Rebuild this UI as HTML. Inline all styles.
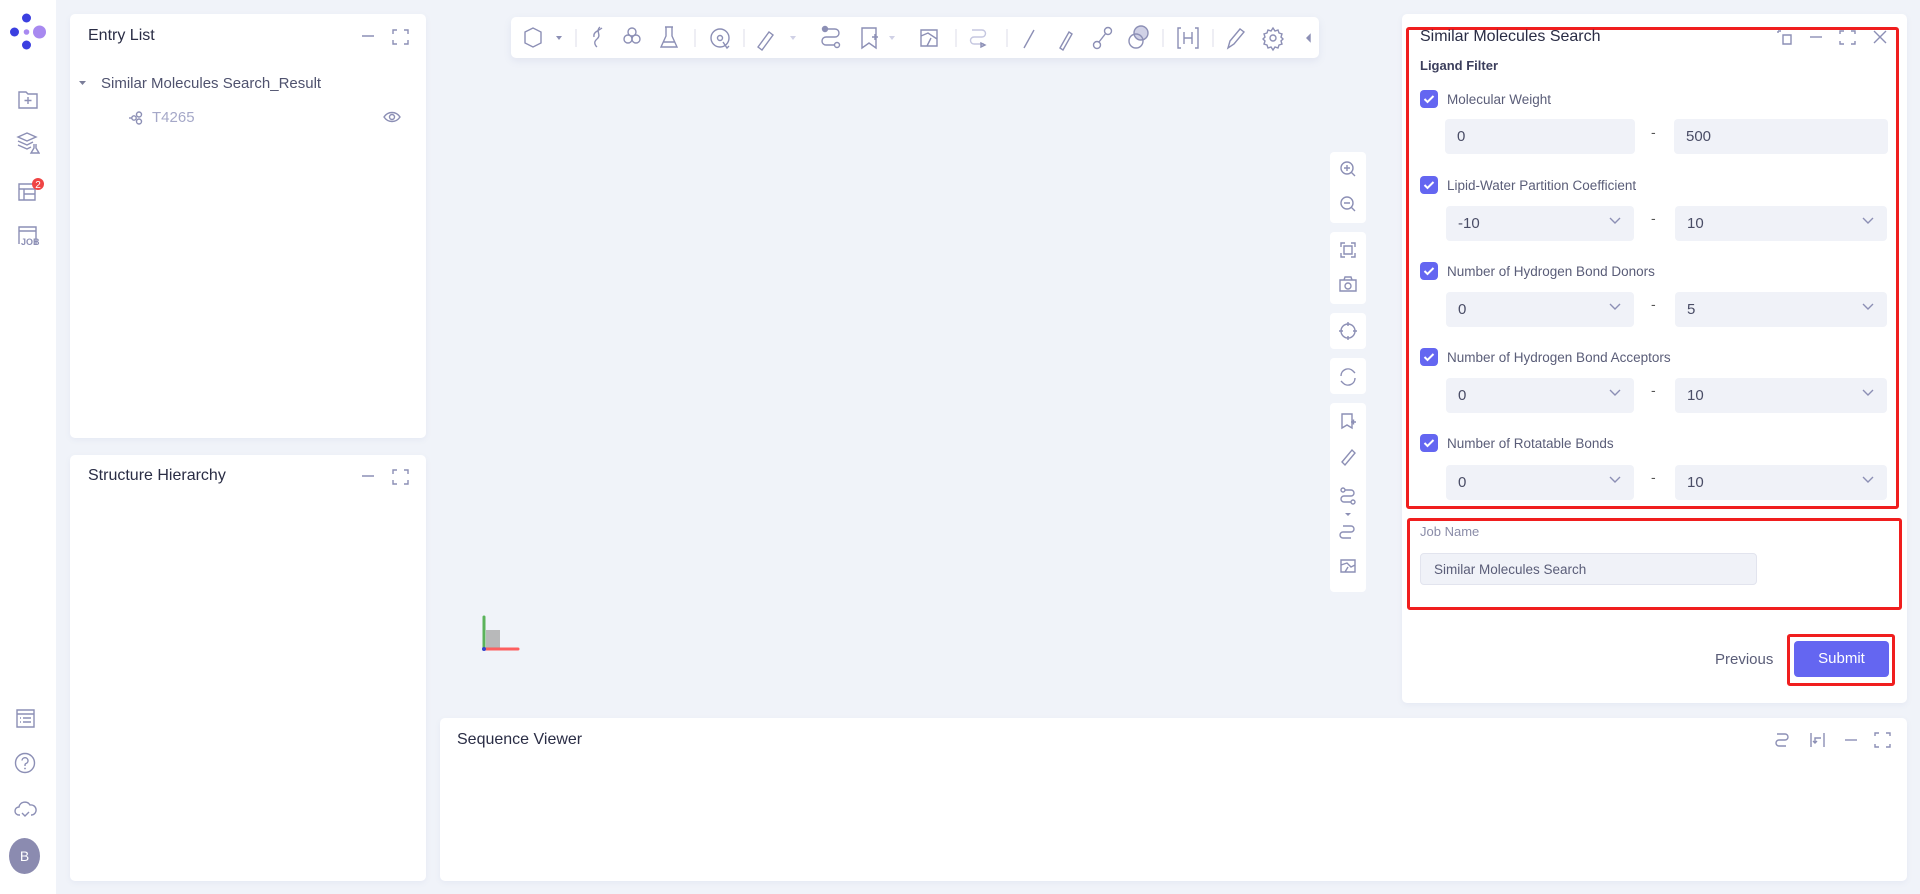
<!DOCTYPE html>
<html><head><meta charset="utf-8">
<style>
*{box-sizing:border-box;margin:0;padding:0}
body{width:1920px;height:894px;background:#f0f3f9;font-family:"Liberation Sans",sans-serif;position:relative;overflow:hidden;color:#2a2d45}
.abs{position:absolute}
.side{left:0;top:0;width:56px;height:894px;background:#fff}
.panel{background:#fff;border-radius:5px;box-shadow:0 2px 6px rgba(120,130,180,.08)}
.ttl{font-size:16px;color:#2a2d45}
.ic{stroke:#8c8fb5;fill:none;stroke-width:1.4}
.cb{width:18px;height:18px;border-radius:4px;background:#6466f1}
.lbl{font-size:13.5px;color:#5a5d78}
.inp{background:#f0f2f8;border-radius:4px;height:35px;font-size:15px;color:#4a4d66;padding:9px 12px 0 12px}
.chev{position:absolute;right:12px;top:9px}
.dash{font-size:14px;color:#555}
.red{border:3px solid #f01e1e;border-radius:3px}
.vt{left:1330px;width:36px;background:#fff;border-radius:4px}
</style></head><body>
<div class="abs side"></div>
<svg class="abs" style="left:8px;top:12px" width="40" height="40"><circle cx="18.5" cy="6" r="4.5" fill="#3b3fe0"/><circle cx="6.5" cy="20" r="4.5" fill="#3b3fe0"/><circle cx="18.5" cy="20" r="2.8" fill="#a889f0"/><circle cx="31.5" cy="20" r="6.5" fill="#a889f0"/><circle cx="18.5" cy="33" r="4.5" fill="#3b3fe0"/></svg>
<svg class="abs" style="left:17px;top:88px" width="22" height="22"><path class="ic" d="M2 4h7l2 2h9v14H2z M11 9v7 M7.5 12.5h7"/></svg>
<svg class="abs" style="left:16px;top:132px" width="24" height="22"><path class="ic" d="M2 5l9-4 9 4-9 4z M2 9l9 4 6-3 M2 13l9 4 4-2 M18 12v4l-3 5h8l-3-5v-4"/></svg>
<svg class="abs" style="left:17px;top:178px" width="30" height="24"><path class="ic" d="M2 6h16v16H2z M2 11h16 M7 11v11 M7 16h11"/><circle cx="21" cy="6" r="6" fill="#ef4444"/><text x="21" y="10" font-size="10" fill="#fff" text-anchor="middle" font-family="Liberation Sans">2</text></svg>
<svg class="abs" style="left:17px;top:224px" width="24" height="22"><path class="ic" d="M2 20V3h17v17 M2 7h17"/><text x="4" y="21" font-size="9" fill="#8c8fb5" font-family="Liberation Sans" font-weight="bold">JOB</text></svg>
<svg class="abs" style="left:15px;top:708px" width="22" height="22"><path class="ic" d="M2 2h17v17H2z M2 6h17 M5 10h1 M8 10h8 M5 14h1 M8 14h8"/></svg>
<svg class="abs" style="left:14px;top:752px" width="24" height="24"><circle class="ic" cx="11" cy="11" r="9.5"/><path class="ic" d="M8 8.5a3 3 0 1 1 4 3c-1 .5-1 1-1 2.5"/><circle cx="11" cy="16.5" r=".9" fill="#8c8fb5"/></svg>
<svg class="abs" style="left:14px;top:798px" width="24" height="22"><path class="ic" d="M6 17H5a4 4 0 0 1 0-8 6 6 0 0 1 11-2 5 5 0 0 1 2 10h-1 M8 15l3 3 4-4"/></svg>
<div class="abs" style="left:9px;top:838px;width:31px;height:36px;border-radius:50%;background:#8b8bb0;color:#fff;font-size:14px;text-align:center;line-height:36px">B</div>

<div class="abs panel" style="left:70px;top:14px;width:356px;height:424px"></div>
<div class="abs ttl" style="left:88px;top:27px">Entry List</div>
<svg class="abs" style="left:360px;top:28px" width="50" height="18"><path class="ic" d="M2 8h12 M33 6V2h4 M44 2h4v4 M48 12v4h-4 M37 16h-4v-4"/></svg>
<svg class="abs" style="left:78px;top:80px" width="10" height="8"><path d="M1 1h7l-3.5 4z" fill="#7a7d99"/></svg>
<div class="abs" style="left:101px;top:75px;font-size:15px;color:#4f526e">Similar Molecules Search_Result</div>
<svg class="abs" style="left:128px;top:110px" width="16" height="16"><g class="ic" stroke="#a5a8c8" stroke-width="1.2"><path d="M1 8h3"/><circle cx="6" cy="8" r="2.2"/><circle cx="11" cy="4.5" r="2.5"/><circle cx="11" cy="11.5" r="2.5"/></g></svg>
<div class="abs" style="left:152px;top:109px;font-size:15px;color:#a5a8c8">T4265</div>
<svg class="abs" style="left:383px;top:110px" width="18" height="14"><path class="ic" d="M1 7c4-6 12-6 16 0-4 6-12 6-16 0z"/><circle class="ic" cx="9" cy="7" r="2.5"/></svg>

<div class="abs panel" style="left:70px;top:455px;width:356px;height:426px"></div>
<div class="abs ttl" style="left:88px;top:467px">Structure Hierarchy</div>
<svg class="abs" style="left:360px;top:468px" width="50" height="18"><path class="ic" d="M2 8h12 M33 6V2h4 M44 2h4v4 M48 12v4h-4 M37 16h-4v-4"/></svg>

<!-- toolbar -->
<div class="abs panel" style="left:511px;top:17px;width:808px;height:41px;box-shadow:0 3px 8px rgba(120,130,180,.12)"></div>
<svg class="abs" style="left:511px;top:17px" width="808" height="41">
<g class="ic" stroke="#9ea0c4">
<path d="M14 15l8-4 8 4v11l-8 4-8-4z"/><path d="M45 19h6l-3 4z" fill="#8c8fb5" stroke="none"/>
<path d="M65 12v18" stroke="#e6e7f0"/>
<path d="M89 10c-5 4 2 8-3 12s0 8 0 8 M91 11c-4 3-9 4-8 9"/>
<circle cx="121" cy="15" r="4"/><circle cx="117" cy="22" r="4"/><circle cx="125" cy="22" r="4"/>
<path d="M154 10h8 M155 10v9l-5 11h16l-5-11v-9 M152 25h12"/>
<path d="M184 12v18" stroke="#e6e7f0"/>
</g>
<g class="ic" stroke="#d0d1e6">
<circle cx="209" cy="21" r="9"/><circle cx="209" cy="21" r="2.5"/><path d="M212 25l4 6 2-2"/>
<path d="M233 12v18" stroke="#e6e7f0"/>
<path d="M247 30l11-15 4 3-11 15z"/><path d="M279 19h6l-3 4z" fill="#d0d1e6" stroke="none"/>
</g>
<g class="ic"><circle cx="314" cy="12" r="2.5" fill="#8c8fb5"/><path d="M316 12h8a4 4 0 0 1 0 8h-9a4 4 0 0 0 0 8h8"/><circle cx="326" cy="28" r="2.5"/></g>
<g class="ic" stroke="#d0d1e6">
<path d="M351 11h14v20l-7-5-7 5z M361 20h6 M364 17v6"/><path d="M378 19h6l-3 4z" fill="#d0d1e6" stroke="none"/>
<path d="M410 13h16v16h-16z M410 19l7-3 9 6 M416 29l4-8"/>
<path d="M445 12v18" stroke="#e6e7f0"/>
<path d="M461 13h10a3.5 3.5 0 0 1 0 7h-8a3.5 3.5 0 0 0 0 7h10" stroke="#c5c7e0"/><path d="M470 26l4 2-4 2z" fill="#c5c7e0"/>
<path d="M496 12v18" stroke="#e6e7f0"/>
<path d="M513 31l10-18"/><path d="M549 31l9-16 3 2-9 16z"/><circle cx="586" cy="28" r="3.5"/><circle cx="597" cy="14" r="3.5"/><path d="M588 25l7-9"/>
<circle cx="630" cy="16" r="7" fill="#d0d1e6"/><circle cx="625" cy="24" r="7"/>
<path d="M652 12v18" stroke="#e6e7f0"/>
</g>
<g class="ic">
<path d="M670 11h-3v20h3 M684 11h3v20h-3 M673 15v12 M681 15v12 M673 21h8"/>
<path d="M702 12v18" stroke="#e6e7f0"/>
<path d="M717 31l2-7 10-12 4 3-10 12z"/>
<circle cx="762" cy="21" r="3"/><path d="M762 11l2 3 3-1 1 3 3 1-1 3 2 2-2 2 1 3-3 1-1 3-3-1-2 3-2-3-3 1-1-3-3-1 1-3-2-2 2-2-1-3 3-1 1-3 3 1z"/>
<path d="M799 18v6l-3-3z" fill="#8c8fb5"/>
</g></svg>

<div class="abs vt" style="top:152px;height:71px"></div>
<div class="abs vt" style="top:232px;height:72px"></div>
<div class="abs vt" style="top:313px;height:36px"></div>
<div class="abs vt" style="top:358px;height:36px"></div>
<div class="abs vt" style="top:403px;height:189px"></div>
<svg class="abs" style="left:1330px;top:152px" width="36" height="440">
<g class="ic">
<circle cx="17" cy="16" r="6"/><path d="M21 20l4 4 M14 16h6 M17 13v6"/>
<circle cx="17" cy="51" r="6"/><path d="M21 55l4 4 M14 51h6"/>
<path d="M11 95v-4h4 M21 91h4v4 M25 101v4h-4 M15 105h-4v-4 M14 94h8v8h-8z"/>
<path d="M10 128h16v11H10z M14 128l1-3h6l1 3"/><circle cx="18" cy="134" r="3"/>
<circle cx="18" cy="179" r="7"/><path d="M18 170v4 M18 184v4 M9 179h4 M23 179h4"/>
<path d="M11 224a7 7 0 0 1 12-5l2 2 M25 226a7 7 0 0 1-12 5l-2-2"/>
<path d="M12 262h10v14l-5-3-5 3z M21 270h5 M23.5 267.5v5"/>
<path d="M12 310l10-12 3 3-10 12z"/>
<circle cx="13" cy="338" r="2"/><path d="M15 338h6a3 3 0 0 1 0 6h-7a3 3 0 0 0 0 6h7"/><circle cx="23" cy="350" r="2"/>
<path d="M15 361h6l-3 3z" fill="#8c8fb5" stroke="none"/>
<path d="M13 374h8a3 3 0 0 1 0 6h-8a3 3 0 0 0 0 6h8"/>
<path d="M11 408h14v12H11z M11 413l6-2 4 4 4-2 M15 420l3-5"/>
</g></svg>

<svg class="abs" style="left:480px;top:612px" width="50" height="50"><rect x="6" y="18" width="14" height="18" fill="#aaa" opacity=".8"/><path d="M4 5v32" stroke="#5bb35b" stroke-width="3" stroke-linecap="round"/><path d="M4 37h34" stroke="#ff5050" stroke-width="3" stroke-linecap="round" opacity=".9"/><circle cx="4" cy="37" r="2" fill="#3344cc"/></svg>

<div class="abs panel" style="left:440px;top:718px;width:1467px;height:163px"></div>
<div class="abs ttl" style="left:457px;top:731px">Sequence Viewer</div>
<svg class="abs" style="left:1773px;top:730px" width="120" height="20">
<g class="ic"><path d="M4 4h8a3 3 0 0 1 0 6H6a3 3 0 0 0 0 6h7"/><path d="M38 3v14 M51 3v14 M48 8h-6v5 M40 11l2 2 2-2"/><path d="M72 10h12"/><path d="M102 6V3h4 M113 3h4v3 M117 14v3h-4 M106 17h-4v-3"/></g></svg>

<div class="abs panel" style="left:1402px;top:14px;width:505px;height:689px"></div>
<div class="abs red" style="left:1406px;top:27px;width:493px;height:482px"></div>
<div class="abs ttl" style="left:1420px;top:28px">Similar Molecules Search</div>
<svg class="abs" style="left:1776px;top:28px" width="120" height="20">
<g class="ic"><path d="M2 3v2 M2 3h3 M7 7h8v9H7z"/><path d="M34 9h12"/><path d="M64 6V3h4 M75 3h4v3 M79 13v3h-4 M68 16h-4v-3"/><path d="M98 3l12 12 M110 3L98 15"/></g></svg>
<div class="abs" style="left:1420px;top:58px;font-size:13px;font-weight:bold;color:#3b3e5c">Ligand Filter</div>

<div class="abs cb" style="left:1420px;top:90px"></div>
<div class="abs lbl" style="left:1447px;top:92px">Molecular Weight</div>
<div class="abs inp" style="left:1445px;top:119px;width:190px">0</div>
<div class="abs dash" style="left:1651px;top:124px">-</div>
<div class="abs inp" style="left:1674px;top:119px;width:214px">500</div>

<div class="abs cb" style="left:1420px;top:176px"></div>
<div class="abs lbl" style="left:1447px;top:178px">Lipid-Water Partition Coefficient</div>
<div class="abs inp" style="left:1446px;top:206px;width:188px">-10<svg class="chev" width="14" height="10"><path class="ic" d="M2 3l5 5 5-5"/></svg></div>
<div class="abs dash" style="left:1651px;top:210px">-</div>
<div class="abs inp" style="left:1675px;top:206px;width:212px">10<svg class="chev" width="14" height="10"><path class="ic" d="M2 3l5 5 5-5"/></svg></div>

<div class="abs cb" style="left:1420px;top:262px"></div>
<div class="abs lbl" style="left:1447px;top:264px">Number of Hydrogen Bond Donors</div>
<div class="abs inp" style="left:1446px;top:292px;width:188px">0<svg class="chev" width="14" height="10"><path class="ic" d="M2 3l5 5 5-5"/></svg></div>
<div class="abs dash" style="left:1651px;top:296px">-</div>
<div class="abs inp" style="left:1675px;top:292px;width:212px">5<svg class="chev" width="14" height="10"><path class="ic" d="M2 3l5 5 5-5"/></svg></div>

<div class="abs cb" style="left:1420px;top:348px"></div>
<div class="abs lbl" style="left:1447px;top:350px">Number of Hydrogen Bond Acceptors</div>
<div class="abs inp" style="left:1446px;top:378px;width:188px">0<svg class="chev" width="14" height="10"><path class="ic" d="M2 3l5 5 5-5"/></svg></div>
<div class="abs dash" style="left:1651px;top:382px">-</div>
<div class="abs inp" style="left:1675px;top:378px;width:212px">10<svg class="chev" width="14" height="10"><path class="ic" d="M2 3l5 5 5-5"/></svg></div>

<div class="abs cb" style="left:1420px;top:434px"></div>
<div class="abs lbl" style="left:1447px;top:436px">Number of Rotatable Bonds</div>
<div class="abs inp" style="left:1446px;top:465px;width:188px">0<svg class="chev" width="14" height="10"><path class="ic" d="M2 3l5 5 5-5"/></svg></div>
<div class="abs dash" style="left:1651px;top:469px">-</div>
<div class="abs inp" style="left:1675px;top:465px;width:212px">10<svg class="chev" width="14" height="10"><path class="ic" d="M2 3l5 5 5-5"/></svg></div>

<svg class="abs" style="left:1420px;top:90px" width="18" height="380">
<g fill="none" stroke="#fff" stroke-width="2"><path d="M4.5 9l3 3 6-6"/><path d="M4.5 95l3 3 6-6"/><path d="M4.5 181l3 3 6-6"/><path d="M4.5 267l3 3 6-6"/><path d="M4.5 353l3 3 6-6"/></g></svg>

<div class="abs red" style="left:1407px;top:518px;width:495px;height:92px"></div>
<div class="abs" style="left:1420px;top:524px;font-size:13px;color:#8a8ca8">Job Name</div>
<div class="abs" style="left:1420px;top:553px;width:337px;height:32px;background:#f0f2f8;border:1px solid #e2e4ee;border-radius:4px;font-size:13.5px;color:#5a5d78;padding:8px 13px">Similar Molecules Search</div>

<div class="abs" style="left:1715px;top:651px;font-size:15px;color:#5a5d78">Previous</div>
<div class="abs red" style="left:1787px;top:634px;width:108px;height:52px"></div>
<div class="abs" style="left:1794px;top:641px;width:95px;height:36px;background:#6466f1;border-radius:4px;color:#fff;font-size:15px;text-align:center;line-height:36px">Submit</div>
</body></html>
